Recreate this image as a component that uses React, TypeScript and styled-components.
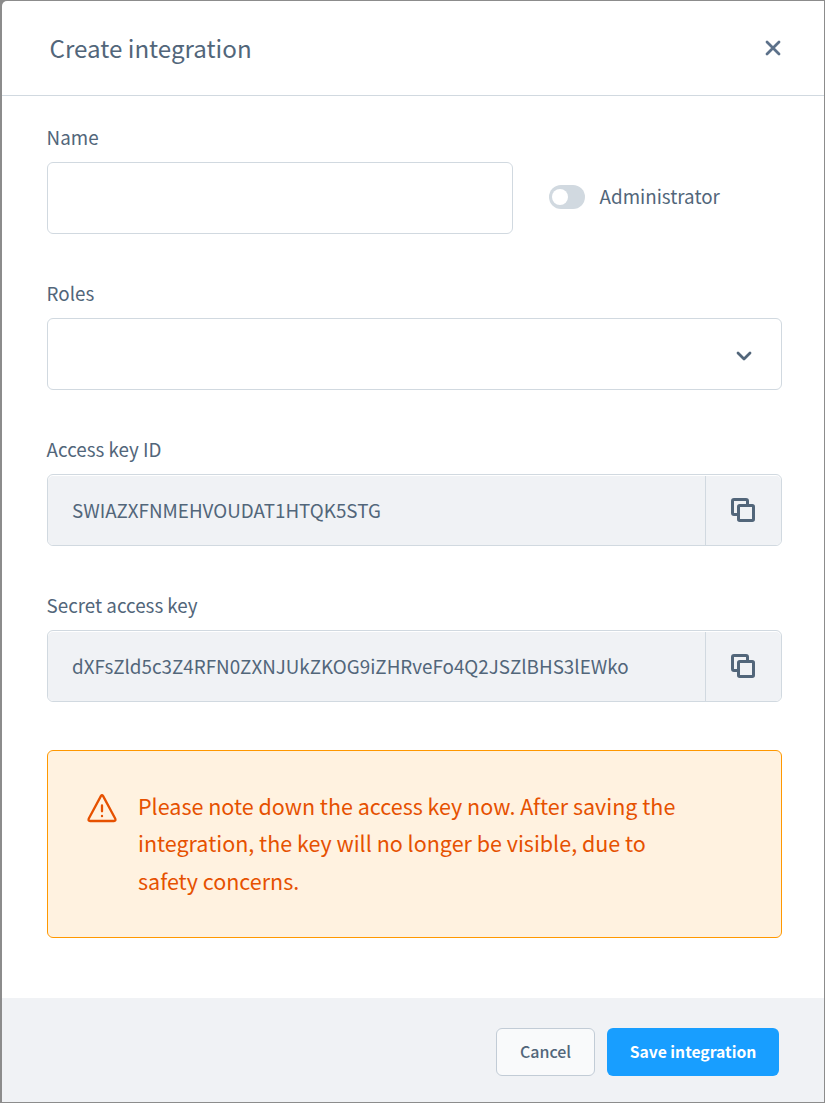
import React from 'react';
import styled, { createGlobalStyle } from 'styled-components';

const Global = createGlobalStyle`
  * { box-sizing: border-box; }
  body { margin: 0; background: #8c8c8c; font-family: "Noto Sans CJK SC", "Noto Sans", sans-serif; color: #52667a; }
  input, button { font-family: inherit; color: inherit; margin: 0; }
`;

const Backdrop = styled.div`
  width: 825px;
  height: 1103px;
  padding: 1px 1px 1px 2px;
  background: #8c8c8c;
`;

const Modal = styled.div`
  display: flex;
  flex-direction: column;
  height: 1101px;
  background: #fff;
  border-radius: 5px 0 0 0;
  overflow: hidden;
`;

const Header = styled.header`
  display: flex;
  align-items: center;
  justify-content: space-between;
  height: 95px;
  padding: 0 43px 0 47.5px;
  border-bottom: 1px solid #d1d9e0;
`;

const Title = styled.h1`
  margin: 0;
  font-size: 24.15px;
  line-height: 36px;
  font-weight: 400;
`;

const IconButton = styled.button`
  display: flex;
  padding: 0;
  border: 0;
  background: none;
`;

const Body = styled.main`
  flex: 1;
  display: flex;
  flex-direction: column;
  gap: 48px;
  padding: 29px 42px 0 45px;
`;

const Row = styled.div`
  display: flex;
  align-items: flex-end;
  gap: 36px;
`;

const Field = styled.div<{ $width?: number }>`
  display: flex;
  flex-direction: column;
  gap: 13px;
  width: ${(p) => (p.$width ? `${p.$width}px` : '100%')};
`;

const Label = styled.label`
  margin-left: -0.4px;
  font-size: 18.8px;
  line-height: 24px;
  white-space: nowrap;
`;

const Fields = styled.div`
  display: flex;
  flex-direction: column;
  gap: 47px;
`;

const TextInput = styled.input`
  width: 100%;
  height: 72px;
  border: 1px solid #d1d9e0;
  border-radius: 6px;
  background: #fff;
  outline: none;
`;

const SelectBox = styled.div`
  display: flex;
  align-items: center;
  justify-content: flex-end;
  height: 72px;
  padding: 3px 29px 0 0;
  border: 1px solid #d1d9e0;
  border-radius: 6px;
`;

const KeyBox = styled.div`
  display: flex;
  height: 72px;
  padding-top: 1px;
  border: 1px solid #d1d9e0;
  border-radius: 6px;
  overflow: hidden;
`;

const KeyValue = styled.span`
  flex: 1;
  padding-left: 24px;
  border-radius: 5px 0 0 5px;
  background: #f0f2f5;
  font-size: 18.81px;
  line-height: 67px;
  white-space: nowrap;
`;

const CopyButton = styled.button`
  display: flex;
  align-items: center;
  justify-content: center;
  width: 76px;
  padding: 0 2px 2px 0;
  border: 0;
  border-left: 1px solid #d1d9e0;
  border-radius: 0 5px 5px 0;
  background: #f0f2f5;
`;

const SwitchRow = styled.div`
  display: flex;
  align-items: center;
  gap: 15px;
  height: 72px;
  padding-bottom: 2px;

  ${Label} {
    padding-bottom: 2px;
    line-height: 22px;
  }
`;

const Switch = styled.span`
  display: flex;
  align-items: center;
  width: 36px;
  height: 24px;
  padding-left: 3.3px;
  border-radius: 12px;
  background: #d1d9e0;
`;

const Knob = styled.span`
  width: 16px;
  height: 16px;
  border-radius: 50%;
  background: #fff;
`;

const Alert = styled.div`
  display: flex;
  align-items: flex-start;
  gap: 21px;
  height: 188px;
  padding: 35.7px 60px 0 39px;
  border: 1px solid #ff9800;
  border-radius: 6px;
  background: #fff2e0;
  color: #e65100;
`;

const AlertText = styled.p`
  margin: 0;
  width: 560px;
  font-size: 21.5px;
  line-height: 37.5px;
`;

const WarningIcon = styled.svg`
  flex: none;
  width: 30px;
  height: 30px;
  margin-top: 6.8px;
`;

const Footer = styled.footer`
  display: flex;
  justify-content: flex-end;
  gap: 12px;
  height: 104px;
  padding: 30px 45px 0 0;
  background: #f0f2f5;
`;

const Button = styled.button<{ $primary?: boolean }>`
  width: ${(p) => (p.$primary ? 172 : 99)}px;
  height: 48px;
  padding: ${(p) => (p.$primary ? '0' : '0 0 2px')};
  border: ${(p) => (p.$primary ? '0' : '1px solid #c2ccd6')};
  border-radius: 6px;
  background: ${(p) => (p.$primary ? '#189eff' : '#f9fafb')};
  color: ${(p) => (p.$primary ? '#fff' : '#52667a')};
  font-size: ${(p) => (p.$primary ? 15.7 : 16)}px;
  font-weight: ${(p) => (p.$primary ? 700 : 500)};
  line-height: ${(p) => (p.$primary ? 46 : 44)}px;
  white-space: nowrap;
`;

const CloseIcon = () => (
  <svg width="16" height="16" viewBox="0 0 16 16" fill="none" stroke="#5c718a" strokeWidth="2.8" strokeLinecap="round">
    <path d="M2 2l12 12M14 2L2 14" />
  </svg>
);

const ChevronIcon = () => (
  <svg width="16" height="10" viewBox="0 0 16 10" fill="none" stroke="#52667a" strokeWidth="2.8" strokeLinecap="round" strokeLinejoin="round">
    <path d="M2 2l6 6 6-6" />
  </svg>
);

const CopyIcon = () => (
  <svg width="24" height="24" viewBox="0 0 24 24" fill="none" stroke="#52667a" strokeWidth="3" strokeLinejoin="round">
    <rect x="7.5" y="7.5" width="15" height="15" rx="1.2" />
    <path d="M7.5 16.5H3Q1.5 16.5 1.5 15V3Q1.5 1.5 3 1.5H15Q16.5 1.5 16.5 3V7" />
  </svg>
);

const KeyField = ({ label, value }: { label: string; value: string }) => (
  <Field>
    <Label>{label}</Label>
    <KeyBox>
      <KeyValue>{value}</KeyValue>
      <CopyButton aria-label="Copy">
        <CopyIcon />
      </CopyButton>
    </KeyBox>
  </Field>
);

export default function App() {
  return (
    <>
      <Global />
      <Backdrop>
        <Modal>
          <Header>
            <Title>Create integration</Title>
            <IconButton aria-label="Close">
              <CloseIcon />
            </IconButton>
          </Header>
          <Body>
            <Fields>
              <Row>
                <Field $width={466}>
                  <Label htmlFor="name">Name</Label>
                  <TextInput id="name" />
                </Field>
                <SwitchRow>
                  <Switch>
                    <Knob />
                  </Switch>
                  <Label>Administrator</Label>
                </SwitchRow>
              </Row>
              <Field>
                <Label>Roles</Label>
                <SelectBox>
                  <ChevronIcon />
                </SelectBox>
              </Field>
              <KeyField label="Access key ID" value="SWIAZXFNMEHVOUDAT1HTQK5STG" />
              <KeyField label="Secret access key" value="dXFsZld5c3Z4RFN0ZXNJUkZKOG9iZHRveFo4Q2JSZlBHS3lEWko" />
            </Fields>
            <Alert>
              <WarningIcon viewBox="0 0 30 30" fill="none" stroke="currentColor" strokeWidth="2.3" strokeLinecap="round" strokeLinejoin="round">
                <path d="M14 2.900Q15 1.400 16 2.900L28.300 25.800Q29 28 27 28H3Q1 28 1.700 25.800Z" />
                <path d="M15 12.500V18.300M15 23V23.200" />
              </WarningIcon>
              <AlertText>
                Please note down the access key now. After saving the integration, the key will no longer be visible, due to
                safety concerns.
              </AlertText>
            </Alert>
          </Body>
          <Footer>
            <Button>Cancel</Button>
            <Button $primary>Save integration</Button>
          </Footer>
        </Modal>
      </Backdrop>
    </>
  );
}
